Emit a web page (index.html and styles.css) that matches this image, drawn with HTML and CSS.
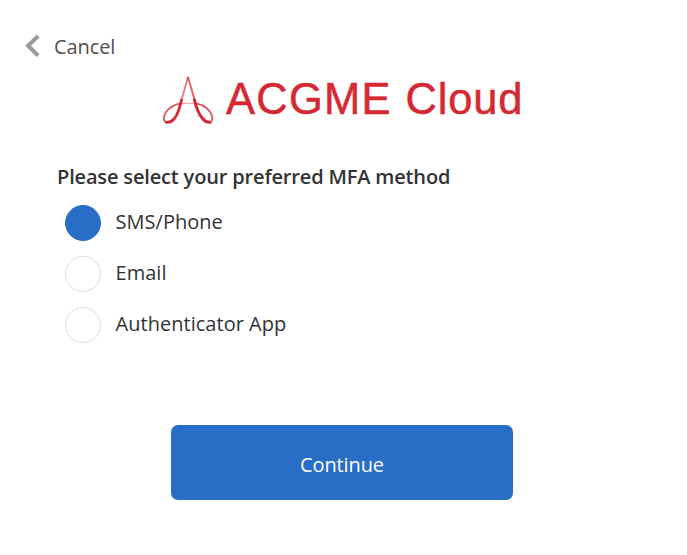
FILE: index.html
```
<!DOCTYPE html>
<html lang="en">
<head>
  <meta charset="UTF-8">
  <title>ACGME Cloud</title>
  <link rel="stylesheet" href="styles.css">
</head>
<body>
  <div class="container">
    <button type="button" class="cancel">
      <svg width="16" height="24" viewBox="0 0 16 24" fill="none">
        <path d="M13.2 2L3 11.8L13.2 21.6" stroke="#999999" stroke-width="4"/>
      </svg>
      <span>Cancel</span>
    </button>

    <svg class="logo" width="366" height="62" viewBox="0 -8 366 62" role="img" aria-label="ACGME Cloud">
      <g fill="none" stroke="#d62833" stroke-linecap="round">
        <path d="M24.8 1.5L18 26" stroke-width="1.7" opacity="0.65"/>
        <path d="M25 1.5L32 25" stroke-width="2.1" opacity="0.7"/>
        <path d="M18.5 24C16.5 33 15 38 11.5 42.5C9 45.5 6 46.5 3.5 46.3" stroke-width="2.8"/>
        <path d="M31.5 24C33.5 33 36 38.5 39.5 42.5C42 45.5 45 46.5 47 46.3" stroke-width="3"/>
        <path d="M3.5 46.3C-1 45 .5 37 7 32C10.5 29.2 14 28 18 27.4" stroke-width="1.7" opacity="0.8"/>
        <path d="M47 46.3C51 45 49.5 37 43.5 32C40 29.2 36.5 28 32.5 27.4" stroke-width="1.7" opacity="0.8"/>
        <path d="M18 27.4H32.5" stroke-width="1" opacity="0.45"/>
      </g>
      <text x="63" y="37.5" textLength="164.5">ACGME</text>
      <text x="242.5" y="37.5" textLength="117">Cloud</text>
    </svg>

    <form class="methods">
      <h1>Please select your preferred MFA method</h1>
      <label class="option">
        <input type="radio" name="method" value="phone" checked>
        <span>SMS/Phone</span>
      </label>
      <label class="option">
        <input type="radio" name="method" value="email">
        <span>Email</span>
      </label>
      <label class="option">
        <input type="radio" name="method" value="app">
        <span>Authenticator App</span>
      </label>
      <button type="button" class="continue">Continue</button>
    </form>
  </div>
</body>
</html>
```
FILE: styles.css
```
body {
  margin: 0;
  background: #fff;
  color: #333;
  font-family: "Open Sans", "Noto Sans", sans-serif;
  font-size: 20px;
}

.container {
  display: flex;
  flex-direction: column;
  box-sizing: border-box;
  height: 555px;
  padding-top: 32px;
}

.cancel {
  display: flex;
  align-items: center;
  align-self: flex-start;
  gap: 13px;
  height: 28px;
  margin-left: 25px;
  padding: 0;
  border: none;
  background: none;
  color: #505050;
  font: inherit;
  letter-spacing: -0.1px;
  cursor: pointer;
}

.logo {
  margin: 8px 0 0 163px;
}

.logo text {
  fill: #d62833;
  stroke: #d62833;
  stroke-width: 0.5;
  font-family: "Liberation Sans", sans-serif;
  font-size: 43.5px;
}

.methods {
  display: flex;
  flex-direction: column;
  margin: 32px 0 0 57px;
}

h1 {
  margin: 0 0 13px;
  font-size: 20px;
  font-weight: 600;
  line-height: 30px;
  letter-spacing: -0.16px;
}

.option {
  display: flex;
  align-items: center;
  gap: 14.5px;
  height: 36px;
  margin: 0 0 15px 8px;
  letter-spacing: 0.03px;
  cursor: pointer;
}

.option span {
  margin-top: -3px;
}

.option input {
  appearance: none;
  box-sizing: border-box;
  width: 36px;
  height: 36px;
  margin: 0;
  border: 1px solid #dcdcdc;
  border-radius: 50%;
  background: #fff;
}

.option input:checked {
  border-color: #286dc6;
  background: #286dc6;
}

.continue {
  width: 342px;
  height: 75px;
  margin: 67px 0 0 114px;
  padding: 3px 0 0;
  border: none;
  border-radius: 7px;
  background: #286dc6;
  color: #fff;
  font: inherit;
  letter-spacing: -0.1px;
  cursor: pointer;
}
```
